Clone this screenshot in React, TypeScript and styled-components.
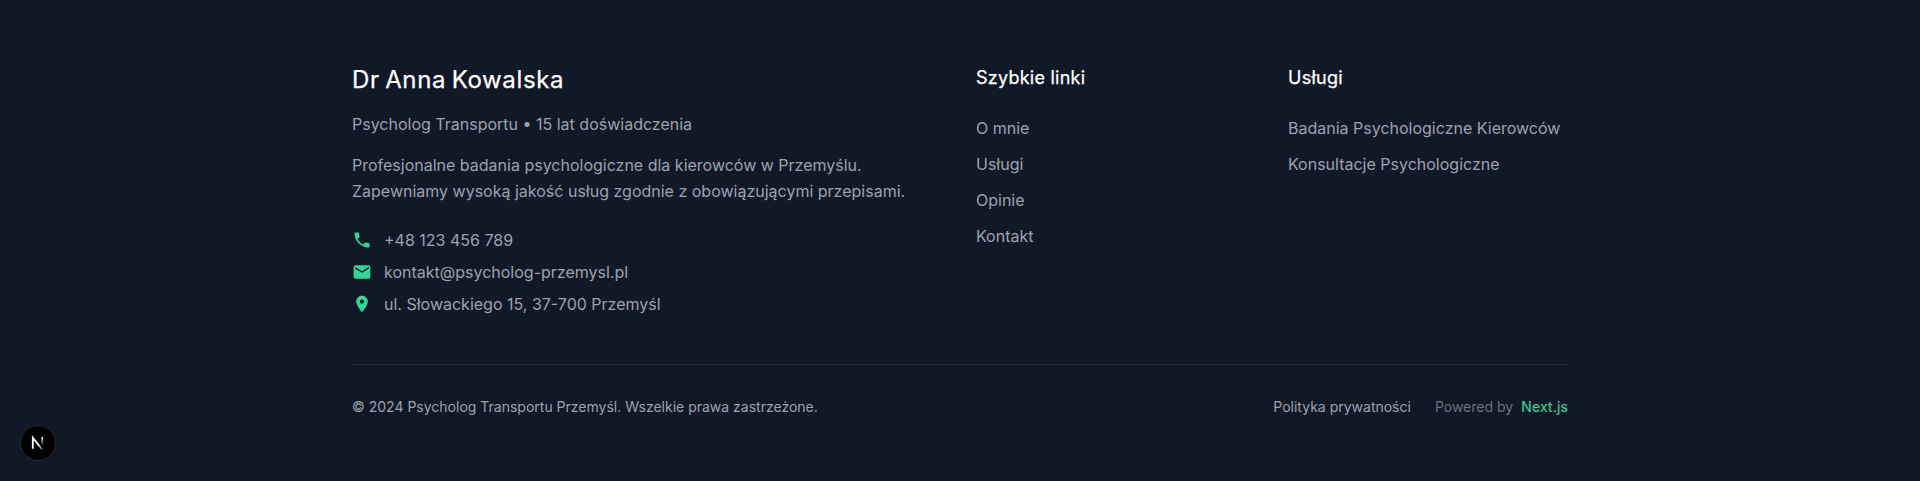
import React from 'react';
import styled, { createGlobalStyle } from 'styled-components';

const GlobalStyle = createGlobalStyle`
  *, *::before, *::after { box-sizing: border-box; margin: 0; padding: 0; }
  body { margin: 0; background: #111827; font-family: Inter, "Liberation Sans", sans-serif; -webkit-font-smoothing: antialiased; }
`;
const Footer = styled.footer`
  min-height: 481px;
  padding: 64px 0;
  background: #111827;
  color: #fff;
  font-size: 16px;
  line-height: 24px;
`;
const Container = styled.div`
  width: 1280px;
  margin: 0 auto;
  padding: 0 32px;
`;
const Columns = styled.div`
  display: grid;
  grid-template-columns: repeat(4, minmax(0, 1fr));
  gap: 32px;
`;
const Brand = styled.div`
  grid-column: span 2;
`;
const BrandName = styled.h3`
  font-size: 24px;
  line-height: 32px;
  font-weight: 400;
  letter-spacing: 0.65px;
  word-spacing: -1.9px;
  -webkit-text-stroke: 0.25px currentColor;
  margin-bottom: 16px;
`;
const Text = styled.p<{ $line?: number; $bottom: number }>`
  color: #9ca3af;
  line-height: ${(p) => p.$line ?? 24}px;
  margin-bottom: ${(p) => p.$bottom}px;
`;
const ContactList = styled.div`
  display: flex;
  flex-direction: column;
  gap: 8px;
`;
const ContactRow = styled.div`
  display: flex;
  align-items: center;
  color: #9ca3af;
  svg { width: 20px; height: 20px; margin-right: 12px; fill: #34d399; }
`;
const Heading = styled.h4`
  font-size: 18px;
  line-height: 28px;
  font-weight: 400;
  letter-spacing: 0.25px;
  -webkit-text-stroke: 0.25px currentColor;
  margin-bottom: 24px;
`;
const LinkList = styled.ul`
  list-style: none;
  display: flex;
  flex-direction: column;
  gap: 12px;
`;
const FooterLink = styled.a`
  color: #9ca3af;
  white-space: nowrap;
`;
const BottomBar = styled.div`
  display: flex;
  justify-content: space-between;
  align-items: center;
  margin-top: 48px;
  padding-top: 32px;
  border-top: 1px solid #1f2937;
  font-size: 14px;
  line-height: 20px;
  color: #9ca3af;
`;
const Legal = styled.div`
  display: flex;
  gap: 24px;
`;
const Powered = styled.div`
  display: flex;
  gap: 8px;
  color: #6b7280;
  a { color: #34d399; letter-spacing: 0.16px; -webkit-text-stroke: 0.15px currentColor; }
`;
const DevBadge = styled.div`
  position: fixed;
  left: 20px;
  bottom: 20px;
  width: 36px;
  height: 36px;
`;

const contacts = [
  { text: '+48 123 456 789', path: 'M6.62 10.79c1.44 2.83 3.76 5.14 6.59 6.59l2.2-2.2c.27-.27.67-.36 1.02-.24 1.12.37 2.33.57 3.57.57.55 0 1 .45 1 1V20c0 .55-.45 1-1 1-9.39 0-17-7.61-17-17 0-.55.45-1 1-1h3.5c.55 0 1 .45 1 1 0 1.25.2 2.45.57 3.57.11.35.03.74-.25 1.02l-2.2 2.2z' },
  { text: 'kontakt@psycholog-przemysl.pl', path: 'M20 4H4c-1.1 0-1.99.9-1.99 2L2 18c0 1.1.9 2 2 2h16c1.1 0 2-.9 2-2V6c0-1.1-.9-2-2-2zm0 4l-8 5-8-5V6l8 5 8-5v2z' },
  { text: 'ul. Słowackiego 15, 37-700 Przemyśl', path: 'M12 2C8.13 2 5 5.13 5 9c0 5.25 7 13 7 13s7-7.75 7-13c0-3.87-3.13-7-7-7zm0 9.5c-1.38 0-2.5-1.12-2.5-2.5s1.12-2.5 2.5-2.5 2.5 1.12 2.5 2.5-1.12 2.5-2.5 2.5z' },
];
const groups = [
  { title: 'Szybkie linki', links: ['O mnie', 'Usługi', 'Opinie', 'Kontakt'] },
  { title: 'Usługi', links: ['Badania Psychologiczne Kierowców', 'Konsultacje Psychologiczne'] },
];

export default function App() {
  return (
    <>
      <GlobalStyle />
      <Footer>
        <Container>
          <Columns>
            <Brand>
              <BrandName>Dr Anna Kowalska</BrandName>
              <Text $bottom={16}>Psycholog Transportu • 15 lat doświadczenia</Text>
              <Text $line={26} $bottom={24}>
                Profesjonalne badania psychologiczne dla kierowców w Przemyślu.<br />
                Zapewniamy wysoką jakość usług zgodnie z obowiązującymi przepisami.
              </Text>
              <ContactList>
                {contacts.map((c) => (
                  <ContactRow key={c.text}>
                    <svg viewBox="0 0 24 24"><path d={c.path} /></svg>
                    <span>{c.text}</span>
                  </ContactRow>
                ))}
              </ContactList>
            </Brand>
            {groups.map((g) => (
              <div key={g.title}>
                <Heading>{g.title}</Heading>
                <LinkList>
                  {g.links.map((l) => (
                    <li key={l}><FooterLink>{l}</FooterLink></li>
                  ))}
                </LinkList>
              </div>
            ))}
          </Columns>
          <BottomBar>
            <p>© 2024 Psycholog Transportu Przemyśl. Wszelkie prawa zastrzeżone.</p>
            <Legal>
              <a>Polityka prywatności</a>
              <Powered><span>Powered by</span><a>Next.js</a></Powered>
            </Legal>
          </BottomBar>
        </Container>
      </Footer>
      <DevBadge>
        <svg width="36" height="36" viewBox="0 0 36 36" fill="none">
          <defs>
            <linearGradient id="stem" x1="0" y1="12" x2="0" y2="21" gradientUnits="userSpaceOnUse">
              <stop stopColor="#fff" />
              <stop offset="1" stopColor="#fff" stopOpacity="0" />
            </linearGradient>
            <linearGradient id="diagonal" x1="19" y1="19.5" x2="23.5" y2="25" gradientUnits="userSpaceOnUse">
              <stop stopColor="#fff" />
              <stop offset="1" stopColor="#fff" stopOpacity="0.1" />
            </linearGradient>
          </defs>
          <circle cx="18" cy="18" r="17.5" fill="#000" stroke="#2a2a2a" />
          <path d="M12.8 23.8V12.8L22.4 24.8" stroke="url(#diagonal)" strokeWidth="1.8" />
          <rect x="21.4" y="12" width="1.7" height="9" fill="url(#stem)" />
        </svg>
      </DevBadge>
    </>
  );
}
